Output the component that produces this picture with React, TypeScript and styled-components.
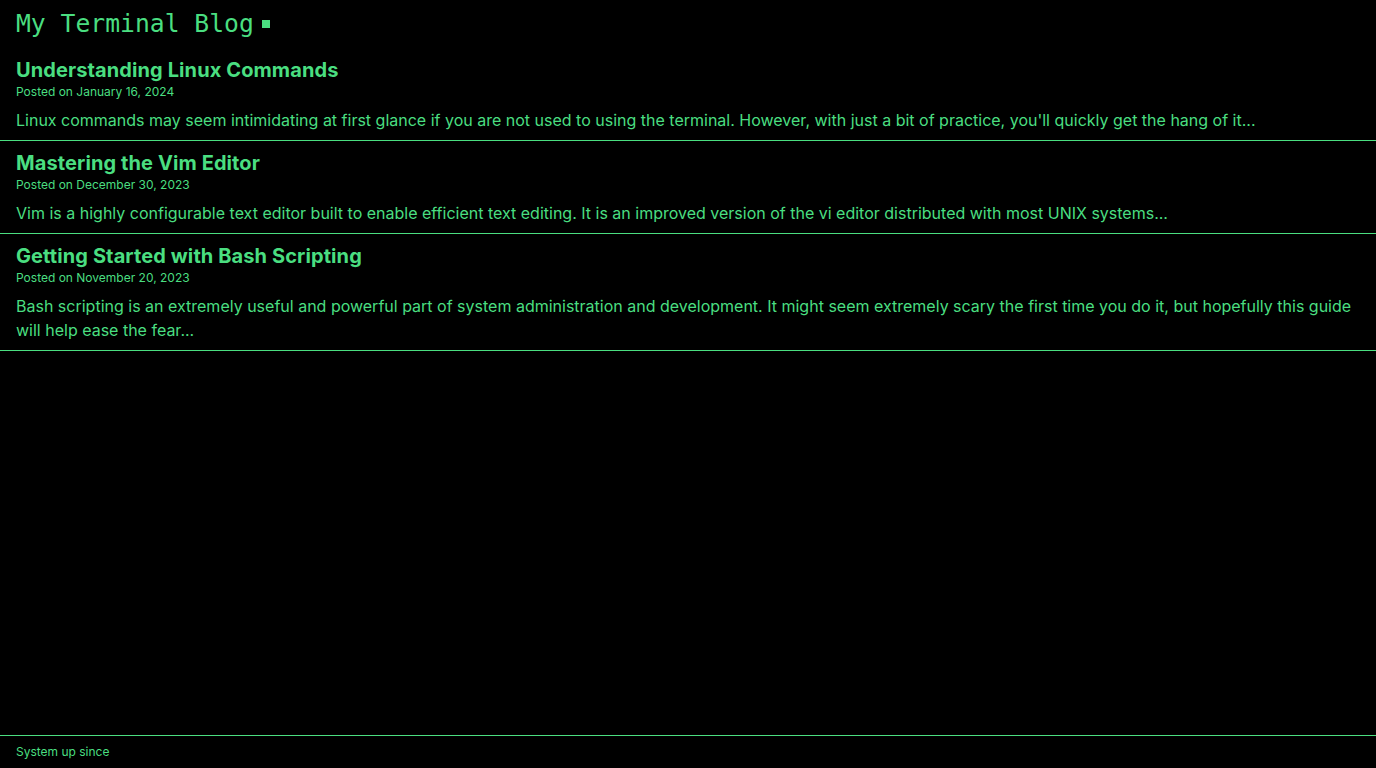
import styled, { createGlobalStyle } from "styled-components";

const green = "#4ade80";

const GlobalStyle = createGlobalStyle`
  * {
    box-sizing: border-box;
  }
  body {
    margin: 0;
    background: #000;
    color: ${green};
    font-family: Inter, "Noto Sans", sans-serif;
  }
`;

const Page = styled.div`
  min-height: 100vh;
  display: flex;
  flex-direction: column;
`;

const Header = styled.header`
  padding: 8px 16px;
  height: 48px;
`;

const Title = styled.h1`
  margin: 0;
  font-family: "DejaVu Sans Mono", "Liberation Mono", monospace;
  font-weight: 400;
  font-size: 24.7px;
  line-height: 32px;
  display: flex;
  align-items: center;
`;

const Cursor = styled.span`
  display: inline-block;
  width: 8px;
  height: 8px;
  margin-left: 8px;
  background: ${green};
`;

const Main = styled.main`
  flex: 1;
`;

const Post = styled.article`
  padding: 8px 16px;
  border-bottom: 1px solid ${green};
`;

const PostTitle = styled.h2`
  margin: 0;
  font-size: 20px;
  line-height: 28px;
  font-weight: 700;
  letter-spacing: 0.1px;
`;

const PostDate = styled.div`
  font-size: 12px;
  line-height: 16px;
`;

const Excerpt = styled.p`
  margin: 8px 0 0;
  font-size: 16px;
  line-height: 24px;
`;

const Footer = styled.footer`
  border-top: 1px solid ${green};
  padding: 8px 16px;
  font-size: 12px;
  line-height: 16px;
`;

const posts = [
  {
    title: "Understanding Linux Commands",
    date: "January 16, 2024",
    excerpt:
      "Linux commands may seem intimidating at first glance if you are not used to using the terminal. However, with just a bit of practice, you'll quickly get the hang of it...",
  },
  {
    title: "Mastering the Vim Editor",
    date: "December 30, 2023",
    excerpt:
      "Vim is a highly configurable text editor built to enable efficient text editing. It is an improved version of the vi editor distributed with most UNIX systems...",
  },
  {
    title: "Getting Started with Bash Scripting",
    date: "November 20, 2023",
    excerpt:
      "Bash scripting is an extremely useful and powerful part of system administration and development. It might seem extremely scary the first time you do it, but hopefully this guide will help ease the fear...",
  },
];

export default function App() {
  return (
    <Page>
      <GlobalStyle />
      <Header>
        <Title>
          My Terminal Blog
          <Cursor />
        </Title>
      </Header>
      <Main>
        {posts.map((p) => (
          <Post key={p.title}>
            <PostTitle>{p.title}</PostTitle>
            <PostDate>Posted on {p.date}</PostDate>
            <Excerpt>{p.excerpt}</Excerpt>
          </Post>
        ))}
      </Main>
      <Footer>System up since</Footer>
    </Page>
  );
}
